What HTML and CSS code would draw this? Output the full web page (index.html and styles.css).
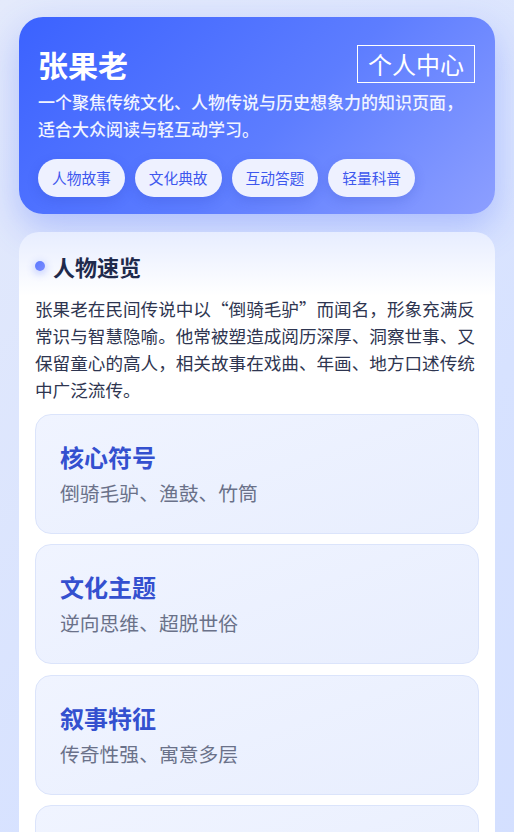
FILE: index.html
```html
<!DOCTYPE html>
<html lang="zh-CN">
<head>
<meta charset="utf-8">
<title>张果老</title>
<link rel="stylesheet" href="styles.css">
</head>
<body>
<main class="page">
  <header class="hero">
    <div class="hero-top">
      <h1 class="hero-title">张果老</h1>
      <a class="hero-link">个人中心</a>
    </div>
    <p class="hero-desc">一个聚焦传统文化、人物传说与历史想象力的知识页面，适合大众阅读与轻互动学习。</p>
    <div class="tags">
      <span class="tag">人物故事</span>
      <span class="tag">文化典故</span>
      <span class="tag">互动答题</span>
      <span class="tag">轻量科普</span>
    </div>
  </header>
  <section class="panel">
    <h2 class="panel-title"><span class="dot"></span>人物速览</h2>
    <p class="panel-text">张果老在民间传说中以“倒骑毛驴”而闻名，形象充满反常识与智慧隐喻。他常被塑造成阅历深厚、洞察世事、又保留童心的高人，相关故事在戏曲、年画、地方口述传统中广泛流传。</p>
    <div class="facts">
      <div class="fact">
        <div class="fact-title">核心符号</div>
        <div class="fact-text">倒骑毛驴、渔鼓、竹筒</div>
      </div>
      <div class="fact">
        <div class="fact-title">文化主题</div>
        <div class="fact-text">逆向思维、超脱世俗</div>
      </div>
      <div class="fact">
        <div class="fact-title">叙事特征</div>
        <div class="fact-text">传奇性强、寓意多层</div>
      </div>
      <div class="fact">
        <div class="fact-title">流传形式</div>
        <div class="fact-text">戏曲、年画、口述传统</div>
      </div>
    </div>
  </section>
</main>
</body>
</html>
```

FILE: styles.css
```css
* { box-sizing: border-box; }
html, body { margin: 0; padding: 0; }
body {
  font-family: "Noto Sans CJK SC", "Noto Sans", sans-serif;
  background: linear-gradient(135deg, #e4eafb 0%, #d7e2ff 60%, #d3dfff 100%);
  min-height: 832px;
  overflow: hidden;
}
.page {
  padding: 17px 19px 0;
  display: flex;
  flex-direction: column;
  gap: 18px;
}
.hero {
  border-radius: 24px;
  background: linear-gradient(135deg, #3b62ff 0%, #5d7dff 55%, #8d9fff 100%);
  box-shadow: 0 14px 36px rgba(70, 105, 255, 0.32);
  padding: 27px 19px 17px;
  color: #fff;
}
.hero-top {
  display: flex;
  justify-content: space-between;
  align-items: center;
}
.hero-title {
  margin: 0;
  font-size: 30px;
  font-weight: 700;
  line-height: 40px;
}
.hero-link {
  font-size: 24px;
  line-height: 36px;
  padding: 0 10px;
  border: 1px solid #fff;
  color: #fff;
  margin-right: 1px;
}
.hero-desc {
  margin: 4px 0 0;
  font-size: 17px;
  line-height: 27px;
  font-weight: 500;
  color: #f1f4ff;
}
.tags {
  display: flex;
  gap: 10px;
  margin-top: 17px;
}
.tag {
  background: #eef1ff;
  color: #3d57ee;
  font-size: 14.7px;
  line-height: 24px;
  padding: 7px 14px;
  border-radius: 999px;
  box-shadow: 0 4px 12px rgba(40, 60, 180, 0.18);
}
.panel {
  border-radius: 20px;
  background: linear-gradient(180deg, #e7edff 0px, #ffffff 64px);
  padding: 18px 16px 16px;
  min-height: 640px;
}
.panel-title {
  margin: 0;
  display: flex;
  align-items: center;
  gap: 8px;
  font-size: 22px;
  line-height: 32px;
  font-weight: 700;
  color: #1f2a4c;
}
.dot {
  width: 10px;
  height: 10px;
  border-radius: 50%;
  background: linear-gradient(135deg, #5a78ff, #7b8cff);
  box-shadow: 0 2px 8px rgba(80, 110, 255, 0.45);
}
.panel-text {
  margin: 13px 0 0;
  font-size: 17.6px;
  line-height: 27px;
  color: #2e3550;
}
.facts {
  margin-top: 11px;
  display: flex;
  flex-direction: column;
  gap: 10.4px;
}
.fact {
  border: 1px solid #dbe4fb;
  border-radius: 16px;
  background: linear-gradient(160deg, #f0f4ff 0%, #e8eefe 100%);
  padding: 26px 24px 25px;
}
.fact-title {
  font-size: 24px;
  line-height: 32px;
  font-weight: 700;
  color: #3450cf;
}
.fact-text {
  margin-top: 5px;
  font-size: 19.8px;
  line-height: 30px;
  color: #6a7189;
}
```
